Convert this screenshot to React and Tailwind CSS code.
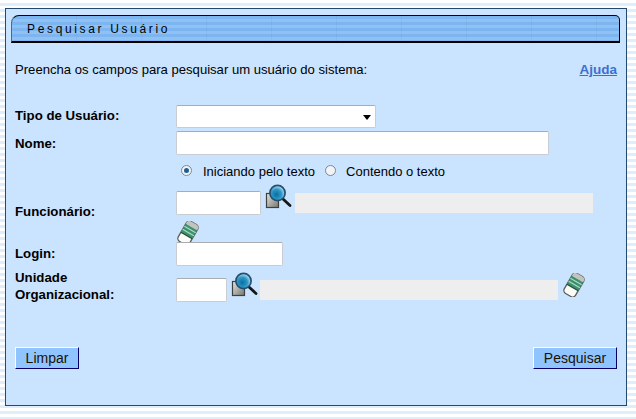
import React from 'react';

const FONT = "font-['Liberation_Sans',Arial,sans-serif]";

function LupaIcon({ id }) {
  return (
    <svg width="27" height="25" viewBox="0 0 27 25" className="shrink-0">
      <defs>
        <linearGradient id={`pag${id}`} x1="0" y1="0" x2="1" y2="1">
          <stop offset="0" stopColor="#e6e6e2" />
          <stop offset="1" stopColor="#76766f" />
        </linearGradient>
        <radialGradient id={`len${id}`} cx="0.42" cy="0.6" r="0.62">
          <stop offset="0" stopColor="#0b6f9f" />
          <stop offset="0.55" stopColor="#2f97c9" />
          <stop offset="1" stopColor="#c4ecfa" />
        </radialGradient>
      </defs>
      <rect x="1.5" y="9.5" width="12" height="14" fill={`url(#pag${id})`} stroke="#3f3f3f" strokeWidth="1.2" />
      <path d="M18 15 L25 21.5" stroke="#161616" strokeWidth="2.8" strokeLinecap="round" />
      <circle cx="12.5" cy="9" r="7.6" fill={`url(#len${id})`} stroke="#23506f" strokeWidth="1.7" />
    </svg>
  );
}

function BorrachaIcon() {
  return (
    <svg width="22" height="24" viewBox="0 0 22 24" className="shrink-0">
      <g transform="rotate(30 11 12)">
        <rect x="4.5" y="0.5" width="13" height="23" rx="3.5" fill="#fbfbf8" stroke="#5c5c58" strokeWidth="1.3" />
        <path d="M4.5 4 Q4.5 0.5 8 0.5 L14 0.5 Q17.5 0.5 17.5 4 L17.5 5 L4.5 5 Z" fill="#c2c2be" />
        <rect x="4.5" y="5" width="13" height="10" fill="#3f8f6e" />
        <path d="M4.5 8 H17.5 M4.5 11.5 H17.5" stroke="#a9e0c6" strokeWidth="1.1" />
        <path d="M4.5 15 H17.5" stroke="#24493a" strokeWidth="1.1" />
      </g>
    </svg>
  );
}

function Radio({ marcado, className }) {
  return (
    <span className={`-mt-[3px] flex h-[11px] w-[11px] items-center justify-center rounded-full border border-[#7d8791] bg-[#f1f4f7] ${className}`}>
      {marcado && <span className="h-[5px] w-[5px] rounded-full bg-[#1f5f8f]" />}
    </span>
  );
}

function Campo({ className }) {
  return <div className={`h-[24px] rounded-[2px] border border-[#c9cdd1] border-t-[#a9adb2] bg-white ${className}`} />;
}

function Botao({ children, className }) {
  return (
    <button className={`h-[22px] border border-t-white border-l-white border-r-[#000066] border-b-[#000066] bg-[#90c4ff] text-[14px] leading-[18px] text-[#1a1200] ${className}`}>
      {children}
    </button>
  );
}

export default function App() {
  return (
    <div className={`h-[419px] w-[636px] overflow-hidden bg-[repeating-linear-gradient(180deg,#ffffff_0,#ffffff_3px,#deeefa_3px,#deeefa_6px)] pl-[5px] pt-[8px] text-black ${FONT}`}>
      <div className="flex h-[398px] w-[622px] flex-col border border-[#24496e] bg-[#cae3fe] px-[5px] pt-[6px]">
        {/* barra do titulo */}
        <div className="flex h-[28px] w-[609px] items-center rounded-tl-[8px] rounded-tr-[5px] border border-b-2 border-black border-l-[#4a6a8a] bg-[repeating-linear-gradient(90deg,transparent_0,transparent_64px,rgba(50,90,140,0.07)_64px,rgba(50,90,140,0.07)_65px),repeating-linear-gradient(180deg,#7db5f0_0,#7db5f0_3px,#90c1f5_3px,#90c1f5_6px)] pl-[15px]">
          <span className="text-[12px] tracking-[2.65px]">Pesquisar Usuário</span>
        </div>

        <div className="mt-[19px] flex items-center justify-between px-[4px]">
          <span className="text-[13.1px] leading-[16px]">Preencha os campos para pesquisar um usuário do sistema:</span>
          <a className="text-[13.5px] font-bold leading-[16px] text-[#3d6fd0] underline">Ajuda</a>
        </div>

        <div className="mt-[25px] grid grid-cols-[161px_1fr] pl-[4px] text-[13.25px]">
          <label className="flex h-[27px] items-center pb-[1px] font-bold">Tipo de Usuário:</label>
          <div className="h-[27px] pt-[2px]">
            <div className="relative h-[23px] w-[200px] rounded-[2px] border border-[#c9cdd1] border-t-[#a9adb2] bg-white">
              <span className="absolute right-[4px] top-[9px] h-0 w-0 border-x-[4px] border-t-[5px] border-x-transparent border-t-black" />
            </div>
          </div>

          <label className="flex h-[26px] items-center pt-[1px] font-bold">Nome:</label>
          <div className="flex h-[26px] items-center">
            <Campo className="w-[373px]" />
          </div>

          <div />
          <div className="flex h-[28px] items-center pl-[5px] pt-[3px] text-[13px]">
            <Radio marcado />
            <span className="ml-[11px]">Iniciando pelo texto</span>
            <Radio className="ml-[10px]" />
            <span className="ml-[10px]">Contendo o texto</span>
          </div>

          <label className="flex items-center pt-[1px] font-bold">Funcionário:</label>
          <div className="flex h-[54px] flex-col">
            <div className="flex items-start">
              <Campo className="mt-[7px] w-[85px]" />
              <div className="ml-[4px]"><LupaIcon id="a" /></div>
              <div className="ml-[3px] mt-[9px] h-[20px] w-[298px] bg-[#eeeeee]" />
            </div>
            <div className="ml-[1px] mt-[6px]"><BorrachaIcon /></div>
          </div>

          <label className="flex h-[32px] items-center font-bold">Login:</label>
          <div className="flex h-[32px] items-center">
            <Campo className="w-[107px]" />
          </div>

          <label className="flex h-[32px] items-center font-bold leading-[17px]">Unidade<br />Organizacional:</label>
          <div className="flex h-[32px] items-start">
            <Campo className="mt-[8px] w-[51px]" />
            <div className="ml-[4px] mt-[2px]"><LupaIcon id="b" /></div>
            <div className="ml-[2px] mt-[10px] h-[20px] w-[298px] bg-[#eeeeee]" />
            <div className="ml-[5px] mt-[3px]"><BorrachaIcon /></div>
          </div>
        </div>

        <div className="mt-[45px] flex justify-between px-[4px]">
          <Botao className="w-[64px]">Limpar</Botao>
          <Botao className="w-[84px]">Pesquisar</Botao>
        </div>
      </div>
    </div>
  );
}
